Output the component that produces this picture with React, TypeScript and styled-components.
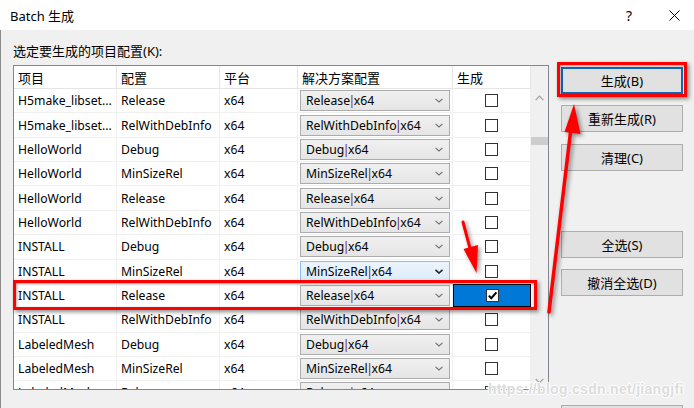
import React from "react";
import styled, { createGlobalStyle, css } from "styled-components";

const GlobalStyle = createGlobalStyle`
  html, body { margin: 0; padding: 0; }
  body {
    width: 694px; height: 408px; overflow: hidden; background: #f0f0f0;
    font-family: "Noto Sans", "Noto Sans CJK SC", sans-serif;
    font-size: 13px; color: #000;
  }
`;

const FONT = `"Noto Sans", "Noto Sans CJK SC", sans-serif`;

const Window = styled.div`
  position: relative;
  width: 694px;
  height: 408px;
  display: flex;
  flex-direction: column;
  background: #f0f0f0;
  overflow: hidden;
`;

const TitleBar = styled.div`
  height: 30px;
  flex: none;
  background: #fff;
  display: flex;
  align-items: center;
  padding-left: 10px;
`;

const TitleText = styled.div`
  flex: 1;
  font-size: 13px;
  font-family: ${FONT};
`;

const TitleButton = styled.div<{ $w: number }>`
  width: ${(p) => p.$w}px;
  height: 30px;
  display: flex;
  align-items: center;
  justify-content: center;
  font-size: 14px;
`;

const Body = styled.div`
  flex: 1;
  border-left: 1px solid #8a8a8a;
  padding: 12px 0 0 12px;
  display: flex;
  flex-direction: column;
  min-height: 0;
`;

const Label = styled.div`
  height: 18px;
  line-height: 18px;
  margin-bottom: 5px;
`;

const Main = styled.div`
  display: flex;
  gap: 12px;
  align-items: flex-start;
`;

const Panel = styled.div`
  width: 536px;
  height: 325px;
  box-sizing: border-box;
  border: 1px solid #828790;
  background: #f0f0f0;
  display: grid;
  grid-template-columns: 517px 17px;
  overflow: hidden;
`;

const Table = styled.div`
  background: #fff;
  overflow: hidden;
`;

const COLS = "103px 103px 78px 155px 78px";

const HeaderRow = styled.div`
  display: grid;
  grid-template-columns: ${COLS};
  height: 23px;
  box-sizing: border-box;
  border-bottom: 1px solid #e5e5e5;
  background: #fff;
`;

const HeaderCell = styled.div`
  border-right: 1px solid #e5e5e5;
  padding-left: 4px;
  display: flex;
  align-items: center;
  white-space: nowrap;
`;

const Row = styled.div`
  display: grid;
  grid-template-columns: ${COLS};
  height: 24.36px;
  box-sizing: border-box;
  border-bottom: 1px solid #f0f0f0;
  font-size: 12.2px;
`;

const Cell = styled.div<{ $center?: boolean; $selected?: boolean }>`
  border-right: 1px solid #f0f0f0;
  padding-left: 4px;
  display: flex;
  align-items: center;
  white-space: nowrap;
  overflow: hidden;
  box-sizing: border-box;
  ${(p) =>
    p.$center &&
    css`
      justify-content: center;
      padding-left: 0;
    `}
  ${(p) =>
    p.$selected &&
    css`
      background: #0078d7;
      border: 1px solid #000;
    `}
`;

const ComboCell = styled.div`
  border-right: 1px solid #f0f0f0;
  display: flex;
  align-items: center;
  padding: 0 2px;
`;

const Combo = styled.div<{ $hover?: boolean }>`
  flex: 1;
  height: 21px;
  box-sizing: border-box;
  border: 1px solid ${(p) => (p.$hover ? "#8cbdec" : "#acacac")};
  background: ${(p) =>
    p.$hover ? "linear-gradient(#ecf4fc, #dcecfc)" : "linear-gradient(#f0f0f0, #e5e5e5)"};
  display: flex;
  align-items: center;
  padding: 0 6px 0 5px;
  justify-content: space-between;
  white-space: nowrap;
`;

const Pipe = styled.span`
  margin: 0 -1.5px;
  color: #5b2a55;
`;

const CheckBox = styled.div`
  width: 13px;
  height: 13px;
  box-sizing: border-box;
  border: 1px solid #333;
  background: #fff;
  display: flex;
  align-items: center;
  justify-content: center;
`;

const ScrollBar = styled.div`
  display: flex;
  flex-direction: column;
  background: #f0f0f0;
`;

const ScrollGap = styled.div`
  height: 23px;
  flex: none;
`;

const ScrollArrow = styled.div`
  height: 17px;
  flex: none;
  display: flex;
  align-items: center;
  justify-content: center;
`;

const ScrollThumb = styled.div`
  margin-top: 31px;
  height: 8px;
  background: #cdcdcd;
  flex: none;
`;

const ScrollTrack = styled.div`
  flex: 1;
`;

const ButtonColumn = styled.div`
  display: flex;
  flex-direction: column;
  padding-top: 2px;
`;

const Button = styled.div<{ $mt: number; $default?: boolean }>`
  margin-top: ${(p) => p.$mt}px;
  width: 122px;
  height: 27px;
  box-sizing: border-box;
  background: #e1e1e1;
  border: ${(p) => (p.$default ? "2px solid #1467b8" : "1px solid #adadad")};
  display: flex;
  align-items: center;
  justify-content: center;
  white-space: nowrap;
`;

const RedBox = styled.div<{ $x: number; $y: number; $w: number; $h: number }>`
  position: absolute;
  left: ${(p) => p.$x}px;
  top: ${(p) => p.$y}px;
  width: ${(p) => p.$w}px;
  height: ${(p) => p.$h}px;
  box-sizing: border-box;
  border: 3px solid #ff0000;
  box-shadow: 2px 2px 4px rgba(0, 0, 0, 0.45), inset 1px 1px 3px rgba(0, 0, 0, 0.35);
  pointer-events: none;
`;

const Overlay = styled.svg`
  position: absolute;
  left: 0;
  top: 0;
  pointer-events: none;
  filter: drop-shadow(2px 2px 2px rgba(0, 0, 0, 0.45));
`;

const Watermark = styled.div`
  position: absolute;
  left: 488px;
  top: 381px;
  font-family: "Liberation Sans", sans-serif;
  font-weight: bold;
  font-size: 14px;
  color: #dcdcdc;
  letter-spacing: 0.3px;
  text-shadow: 1px 0 0 #fff, -1px 0 0 #fff, 0 1px 0 #fff, 0 -1px 0 #fff;
  pointer-events: none;
`;

const Chevron = ({ dark }: { dark?: boolean }) => (
  <svg width="8" height="5" viewBox="0 0 8 5">
    <polyline points="0.5,0.8 4,4 7.5,0.8" fill="none" stroke={dark ? "#222" : "#707070"} strokeWidth={dark ? 1.6 : 1.1} />
  </svg>
);

type RowData = [string, string, string];
const rows: RowData[] = [
  ["H5make_libset...", "Release", "x64"],
  ["H5make_libset...", "RelWithDebInfo", "x64"],
  ["HelloWorld", "Debug", "x64"],
  ["HelloWorld", "MinSizeRel", "x64"],
  ["HelloWorld", "Release", "x64"],
  ["HelloWorld", "RelWithDebInfo", "x64"],
  ["INSTALL", "Debug", "x64"],
  ["INSTALL", "MinSizeRel", "x64"],
  ["INSTALL", "Release", "x64"],
  ["INSTALL", "RelWithDebInfo", "x64"],
  ["LabeledMesh", "Debug", "x64"],
  ["LabeledMesh", "MinSizeRel", "x64"],
  ["LabeledMesh", "Release", "x64"],
];

export default function App() {
  return (
    <Window>
      <GlobalStyle />
      <TitleBar>
        <TitleText>Batch 生成</TitleText>
        <TitleButton $w={50}>?</TitleButton>
        <TitleButton $w={40}>
          <svg width="11" height="11" viewBox="0 0 11 11">
            <path d="M0.5 0.5 L10.5 10.5 M10.5 0.5 L0.5 10.5" stroke="#000" strokeWidth="1" />
          </svg>
        </TitleButton>
      </TitleBar>
      <Body>
        <Label>选定要生成的项目配置(K):</Label>
        <Main>
          <Panel>
            <Table>
              <HeaderRow>
                <HeaderCell>项目</HeaderCell>
                <HeaderCell>配置</HeaderCell>
                <HeaderCell>平台</HeaderCell>
                <HeaderCell>解决方案配置</HeaderCell>
                <HeaderCell>生成</HeaderCell>
              </HeaderRow>
              {rows.map((r, i) => (
                <Row key={i}>
                  <Cell>{r[0]}</Cell>
                  <Cell>{r[1]}</Cell>
                  <Cell>{r[2]}</Cell>
                  <ComboCell>
                    <Combo $hover={i === 7}>
                      <span>
                        {r[1]}
                        <Pipe>|</Pipe>
                        {r[2]}
                      </span>
                      <Chevron dark={i === 7} />
                    </Combo>
                  </ComboCell>
                  <Cell $center $selected={i === 8}>
                    <CheckBox>
                      {i === 8 && (
                        <svg width="11" height="11" viewBox="0 0 11 11">
                          <polyline points="1.8,5.6 4.3,8.2 9.4,2.4" fill="none" stroke="#000" strokeWidth="2" />
                        </svg>
                      )}
                    </CheckBox>
                  </Cell>
                </Row>
              ))}
            </Table>
            <ScrollBar>
              <ScrollGap />
              <ScrollArrow>
                <svg width="9" height="6" viewBox="0 0 9 6">
                  <polyline points="0.7,5.2 4.5,1.2 8.3,5.2" fill="none" stroke="#a0a0a0" strokeWidth="1.2" />
                </svg>
              </ScrollArrow>
              <ScrollThumb />
              <ScrollTrack />
              <ScrollArrow>
                <svg width="9" height="6" viewBox="0 0 9 6">
                  <polyline points="0.7,0.8 4.5,4.8 8.3,0.8" fill="none" stroke="#a0a0a0" strokeWidth="1.2" />
                </svg>
              </ScrollArrow>
            </ScrollBar>
          </Panel>
          <ButtonColumn>
            <Button $mt={0} $default>生成(B)</Button>
            <Button $mt={11}>重新生成(R)</Button>
            <Button $mt={12}>清理(C)</Button>
            <Button $mt={60}>全选(S)</Button>
            <Button $mt={11}>撤消全选(D)</Button>
            <Button $mt={109}>关闭</Button>
          </ButtonColumn>
        </Main>
      </Body>

      <RedBox $x={557} $y={62} $w={130} $h={35} />
      <RedBox $x={13} $y={280} $w={524} $h={30} />

      <Overlay width="694" height="408" viewBox="0 0 694 408">
        <line x1="463" y1="222" x2="471" y2="252" stroke="#ff0000" strokeWidth="3" strokeLinecap="round" />
        <polygon points="463.5,249 478,245 476.5,273" fill="#ff0000" />
        <line x1="549" y1="312" x2="571" y2="128" stroke="#ff0000" strokeWidth="3.5" strokeLinecap="round" />
        <polygon points="564.5,132 580.5,134 574,104" fill="#ff0000" />
      </Overlay>

      <Watermark>https://blog.csdn.net/jiangjfi</Watermark>
    </Window>
  );
}
